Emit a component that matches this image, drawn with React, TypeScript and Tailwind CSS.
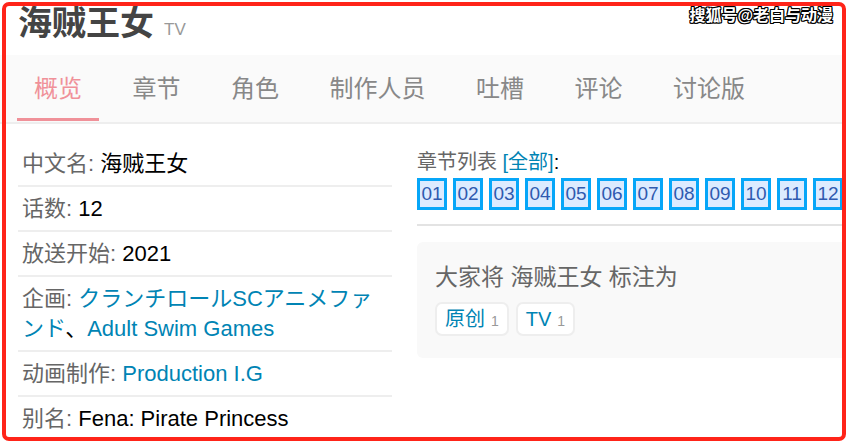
import React from "react";

const font = { fontFamily: '"Liberation Sans", "Noto Sans CJK SC", Arial, sans-serif' };

const tabs = ["概览", "章节", "角色", "制作人员", "吐槽", "评论", "讨论版"];
const eps = ["01", "02", "03", "04", "05", "06", "07", "08", "09", "10", "11", "12"];

function Row({ label, children, last }: { label: string; children: React.ReactNode; last?: boolean }) {
  return (
    <div
      className={
        "px-[4px] py-[6.5px] text-[22px] leading-[30px] " +
        (last ? "" : "border-b-2 border-[#eeeeee]")
      }
    >
      <span className="text-[#666666]">{label}: </span>
      {children}
    </div>
  );
}

export default function App() {
  return (
    <div className="relative w-[849px] h-[444px] overflow-hidden bg-white" style={font}>
      <div className="w-[843px] h-full overflow-hidden">
        {/* header */}
        <div className="h-[55px] pl-[18px] pt-[3px] flex items-baseline gap-[10px]">
          <span className="text-[34px] leading-[40px] font-bold text-[#444444]">海贼王女</span>
          <span className="text-[17px] text-[#999999]">TV</span>
        </div>
        {/* tabs */}
        <div className="bg-[#fafafa] border-b-2 border-[#eeeeee] flex pl-[17px] gap-[16.5px]">
          {tabs.map((t, i) => (
            <div
              key={t}
              className={
                "px-[17px] pt-[19px] pb-[14px] mb-[1px] text-[24px] leading-[30px] border-b-[3px] " +
                (i === 0 ? "text-[#f09199] border-[#f09199]" : "text-[#888888] border-transparent")
              }
            >
              {t}
            </div>
          ))}
        </div>
        {/* main */}
        <div className="flex pl-[18px] pt-[18px] gap-[25px]">
          <div className="w-[374px] shrink-0">
            <Row label="中文名">
              <span className="text-black">海贼王女</span>
            </Row>
            <Row label="话数">
              <span className="text-black">12</span>
            </Row>
            <Row label="放送开始">
              <span className="text-black">2021</span>
            </Row>
            <Row label="企画">
              <span className="text-[#0084b4]">クランチロールSCアニメファンド</span>
              <span className="text-black">、</span>
              <span className="text-[#0084b4]">Adult Swim Games</span>
            </Row>
            <Row label="动画制作">
              <span className="text-[#0084b4]">Production I.G</span>
            </Row>
            <Row label="别名" last>
              <span className="text-black">Fena: Pirate Princess</span>
            </Row>
          </div>
          <div className="w-[440px] shrink-0 pt-[6px]">
            <div className="text-[20px] leading-[28px]">
              <span className="text-[#666666]">章节列表 </span>
              <span className="text-[#0084b4]">[全部]</span>
              <span className="text-black">:</span>
            </div>
            <div className="mt-[2px] flex gap-[6px]">
              {eps.map((e) => (
                <div
                  key={e}
                  className="w-[30px] h-[32px] shrink-0 border-[3px] border-[#06a6f8] bg-[#dcebff] flex items-center justify-center text-[19px] text-[#2f5ab0]"
                >
                  {e}
                </div>
              ))}
            </div>
            <div className="mt-[14px] h-[2px] bg-[#e3e3e3]" />
            <div className="mt-[16px] rounded-[6px] bg-[#f9f9f9] pt-[19px] pl-[18px] pb-[22px]">
              <div className="text-[23px] leading-[32px] text-[#666666]">大家将 海贼王女 标注为</div>
              <div className="mt-[9px] flex gap-[7px]">
                <div className="h-[34px] border-2 border-[#eeeeee] bg-white rounded-[7px] px-[8px] leading-[30px] flex items-baseline">
                  <span className="text-[20px] text-[#0084b4]">原创</span>
                  <span className="ml-[6px] text-[14px] text-[#999999]">1</span>
                </div>
                <div className="h-[34px] border-2 border-[#eeeeee] bg-white rounded-[7px] px-[8px] leading-[30px] flex items-baseline">
                  <span className="text-[20px] text-[#0084b4]">TV</span>
                  <span className="ml-[6px] text-[14px] text-[#999999]">1</span>
                </div>
              </div>
            </div>
          </div>
        </div>
      </div>
      {/* red annotation frame */}
      <div className="pointer-events-none absolute left-[2px] top-[2px] w-[844px] h-[439px] border-[4px] border-[#ff2419] rounded-[7px]" />
      {/* watermark */}
      <div className="absolute top-[5px] right-[16px] text-[16px] leading-[22px] font-bold text-white [text-shadow:1px_1px_0_#000,-1px_-1px_0_#000,1px_-1px_0_#000,-1px_1px_0_#000,0_1px_0_#000,0_-1px_0_#000,1px_0_0_#000,-1px_0_0_#000]">
        搜狐号@老白与动漫
      </div>
    </div>
  );
}
